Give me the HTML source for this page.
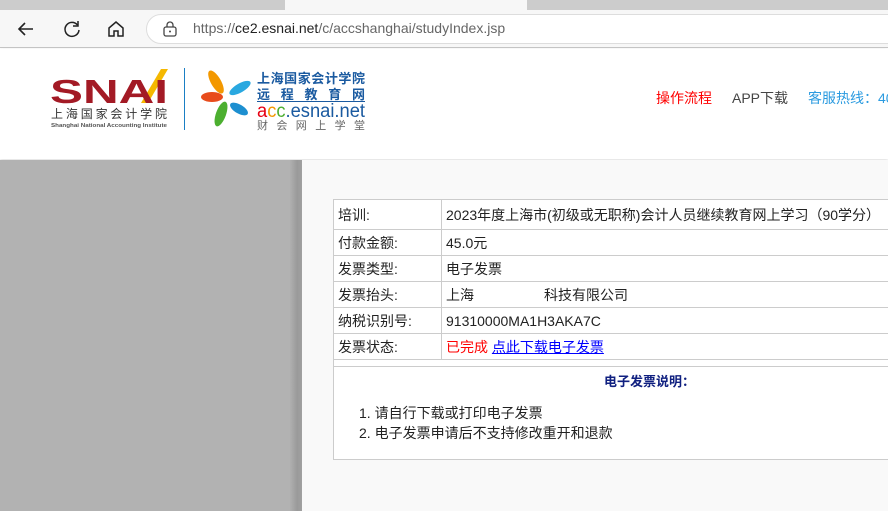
<!DOCTYPE html>
<html><head><meta charset="utf-8"><style>
*{margin:0;padding:0;box-sizing:border-box}
body{width:888px;height:511px;overflow:hidden;background:#fff;font-family:"Liberation Sans","Noto Sans CJK SC",sans-serif;position:relative}
.abs{position:absolute}
.tabbar{left:0;top:0;width:888px;height:10px;background:#ccc}
.tab{left:285px;top:0;width:242px;height:10px;background:#f7f7f7}
.addr{left:0;top:10px;width:888px;height:38px;background:#f7f7f7;border-bottom:1px solid #c6c6c6}
.url{left:146px;top:14px;width:760px;height:30px;background:#fff;border-radius:15px;border:1px solid #ddd}
.urltext{left:193px;top:20px;font-size:14px;color:#666}
.urltext b{font-weight:normal;color:#222}
.hdr{left:0;top:49px;width:888px;height:110px;background:#fff;box-shadow:0 1px 3px rgba(0,0,0,.15)}
.gray{left:0;top:160px;width:296px;height:351px;background:#b2b2b2}
.shadow{left:290px;top:160px;width:12px;height:351px;background:linear-gradient(90deg,#b0b0b0,#9a9a9a 60%,#a0a0a0)}
.content{left:302px;top:160px;width:586px;height:351px;background:#f9f9f9}
table{position:absolute;left:333px;top:199px;width:620px;border-collapse:collapse;font-size:14px;color:#222;background:#fff}
td{border:1px solid #ccc;height:26px;padding:0 4px 0 4px;white-space:nowrap}
td.l{width:108px}
</style></head><body>
<div class="abs tabbar"></div><div class="abs tab"></div>
<div class="abs addr"></div>
<svg class="abs" style="left:16px;top:19px" width="20" height="20" viewBox="0 0 20 20"><path d="M17 10H3M9 4l-6 6 6 6" fill="none" stroke="#222" stroke-width="1.6"/></svg>
<svg class="abs" style="left:62px;top:19px" width="20" height="20" viewBox="0 0 20 20"><path d="M15.5 6A7 7 0 1 0 17 11" fill="none" stroke="#222" stroke-width="1.5"/><path d="M16 2v5h-5" fill="none" stroke="#222" stroke-width="1.5"/></svg>
<svg class="abs" style="left:106px;top:19px" width="20" height="20" viewBox="0 0 20 20"><path d="M3 9l7-6 7 6v8h-5v-5h-4v5H3z" fill="none" stroke="#222" stroke-width="1.5"/></svg>
<div class="abs url"></div>
<svg class="abs" style="left:162px;top:20px" width="16" height="18" viewBox="0 0 16 18"><rect x="2" y="7" width="12" height="9" rx="2" fill="none" stroke="#444" stroke-width="1.3"/><path d="M5 7V5a3 3 0 0 1 6 0v2" fill="none" stroke="#444" stroke-width="1.3"/><circle cx="8" cy="11.5" r="1" fill="#444"/></svg>
<div class="abs urltext">https://<b>ce2.esnai.net</b>/c/accshanghai/studyIndex.jsp</div>
<div class="abs hdr"></div>
<svg class="abs" style="left:0;top:49px" width="400" height="110" viewBox="0 49 400 110">
<polygon points="141,103 148,103 168,69 161,69" fill="#f5b800"/>
<text x="50" y="103" font-family="Liberation Sans" font-weight="bold" font-size="33" fill="#a31a25" textLength="118" lengthAdjust="spacingAndGlyphs">SNAI</text>
<text x="51" y="118" font-family="Noto Sans CJK SC" font-size="12" fill="#333" textLength="116" lengthAdjust="spacing">上海国家会计学院</text>
<text x="51" y="127" font-family="Liberation Sans" font-weight="bold" font-size="5.5" fill="#555" textLength="116" lengthAdjust="spacingAndGlyphs">Shanghai National Accounting Institute</text>
<rect x="184" y="68" width="1" height="62" fill="#1a7fc4"/>
<ellipse cx="216" cy="82" rx="5" ry="13" transform="rotate(-30 216 82)" fill="#f39800"/>
<ellipse cx="212" cy="97" rx="11" ry="5" fill="#e84c1c"/>
<ellipse cx="240" cy="88" rx="12" ry="4.5" transform="rotate(-30 240 88)" fill="#29a8e0"/>
<ellipse cx="239" cy="109" rx="10" ry="4.5" transform="rotate(30 239 109)" fill="#1d8fd0"/>
<ellipse cx="221" cy="114" rx="5" ry="13" transform="rotate(20 221 114)" fill="#4caf30"/>
<text x="257" y="83" font-family="Noto Sans CJK SC" font-weight="bold" font-size="13" fill="#1a5aa0" textLength="108" lengthAdjust="spacing">上海国家会计学院</text>
<text x="257" y="99" font-family="Noto Sans CJK SC" font-weight="bold" font-size="13" fill="#1a5aa0" textLength="108" lengthAdjust="spacing">远程教育网</text>
<rect x="257" y="101" width="108" height="1" fill="#1a5aa0"/>
<text x="257" y="117" font-family="Liberation Sans" font-size="19" fill="#1a5aa0" textLength="108" lengthAdjust="spacingAndGlyphs"><tspan fill="#e60012">a</tspan><tspan fill="#f39800">c</tspan><tspan fill="#4caf30">c</tspan>.esnai.net</text>
<text x="257" y="129" font-family="Noto Sans CJK SC" font-size="11" fill="#666" textLength="108" lengthAdjust="spacing">财会网上学堂</text>
</svg>
<div class="abs" style="left:656px;top:88px;font-size:14px;color:#f00">操作流程</div>
<div class="abs" style="left:732px;top:88px;font-size:14px;color:#444">APP下载</div>
<div class="abs" style="left:808px;top:88px;font-size:14px;color:#2b9be0;white-space:nowrap">客服热线：40</div>
<div class="abs gray"></div><div class="abs shadow"></div><div class="abs content"></div>
<table>
<tr><td class="l" style="height:30px">培训:</td><td>2023年度上海市(初级或无职称)会计人员继续教育网上学习（90学分）</td></tr>
<tr><td class="l">付款金额:</td><td>45.0元</td></tr>
<tr><td class="l">发票类型:</td><td>电子发票</td></tr>
<tr><td class="l">发票抬头:</td><td>上海<span style="display:inline-block;width:70px"></span>科技有限公司</td></tr>
<tr><td class="l">纳税识别号:</td><td>91310000MA1H3AKA7C</td></tr>
<tr><td class="l">发票状态:</td><td><span style="color:#f00">已完成</span> <a style="color:#00f;text-decoration:underline">点此下载电子发票</a></td></tr>
<tr><td colspan="2" style="height:7px;padding:0"></td></tr>
<tr><td colspan="2" style="height:93px;vertical-align:top;padding:0;position:relative">
<div style="position:absolute;left:270px;top:4px;font-weight:bold;color:#102080;font-size:13px">电子发票说明：</div>
<div style="position:absolute;left:25px;top:36px;line-height:20px;font-size:14px">1. 请自行下载或打印电子发票<br>2. 电子发票申请后不支持修改重开和退款</div>
</td></tr>
</table>
</body></html>
